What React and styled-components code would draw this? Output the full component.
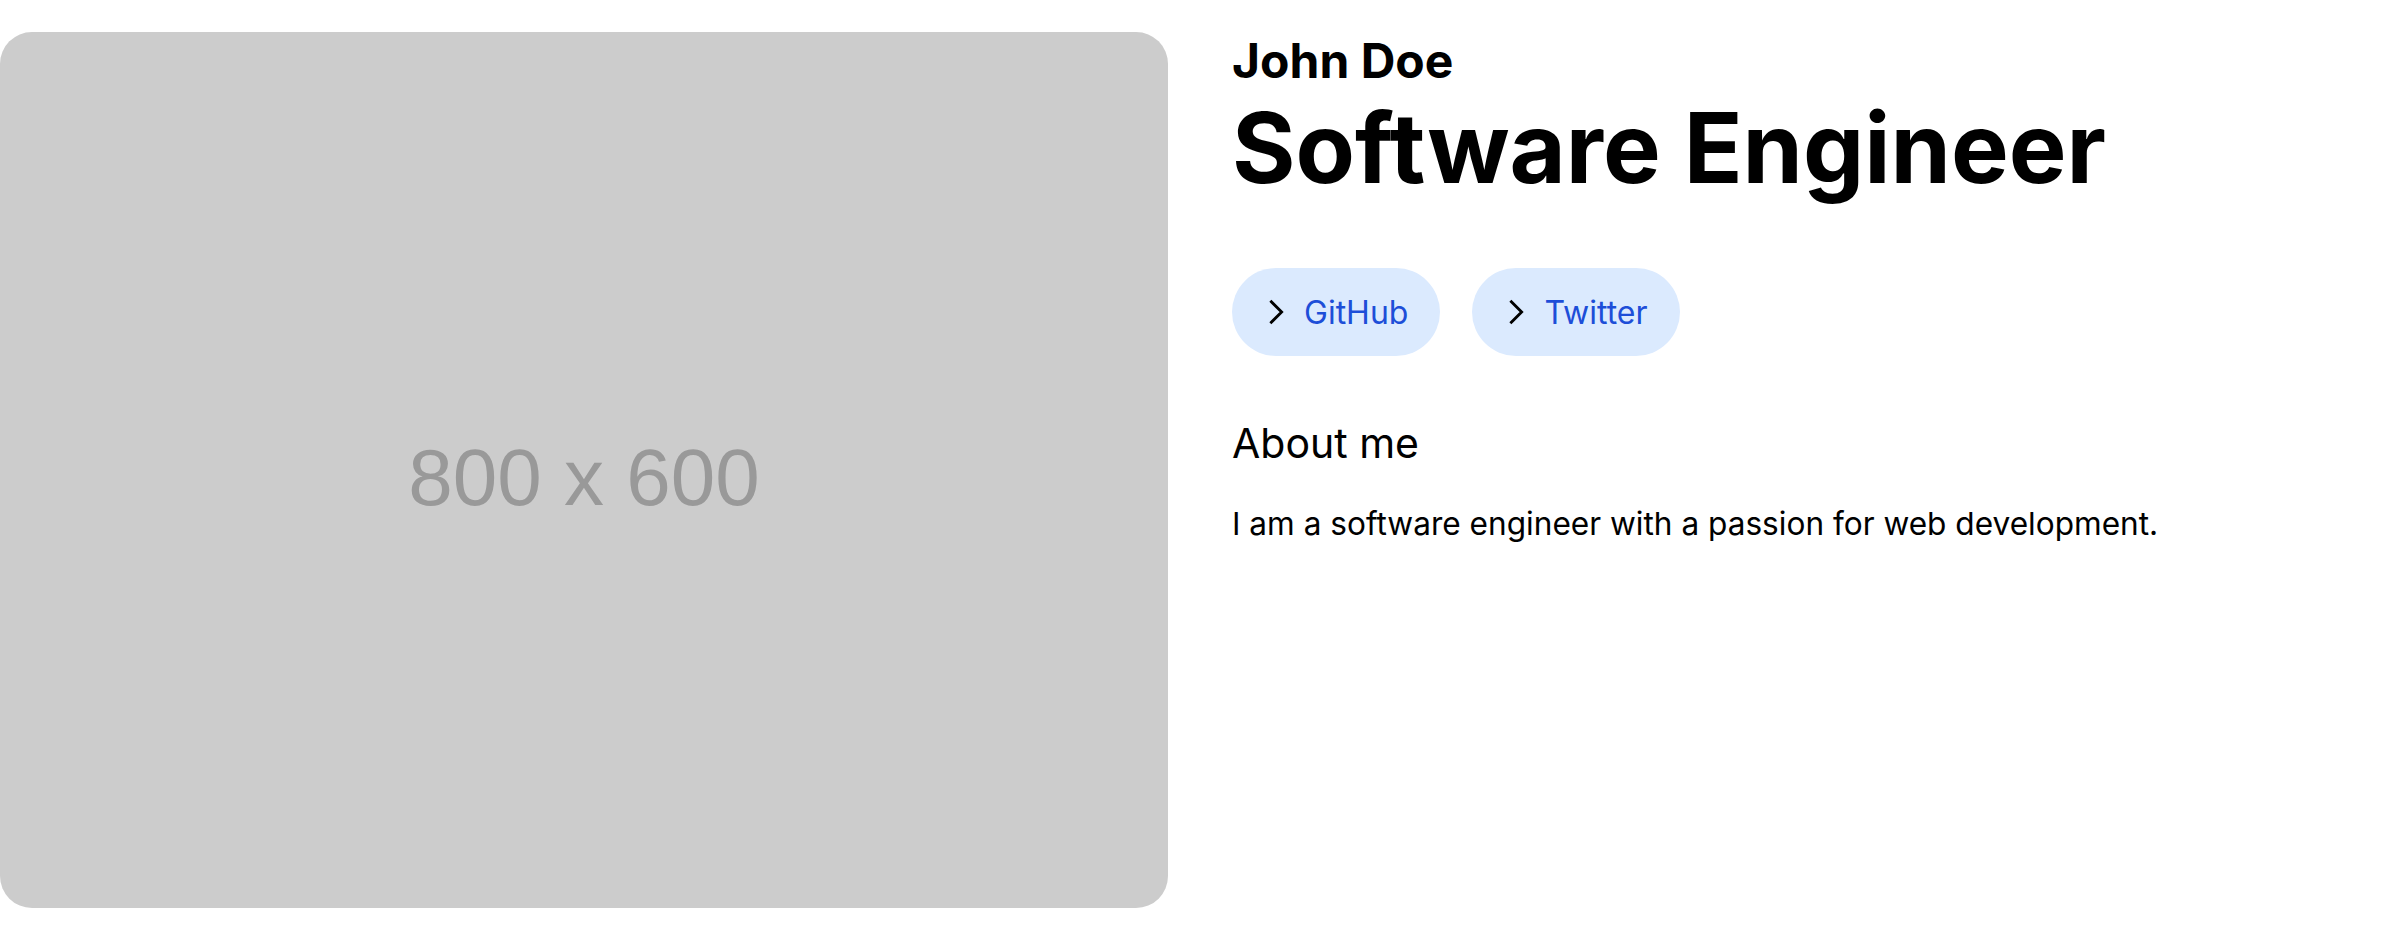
import React from 'react';
import styled, { createGlobalStyle } from 'styled-components';

const GlobalStyle = createGlobalStyle`
  body {
    margin: 0;
    background: #fff;
    font-family: Inter, "Noto Sans", sans-serif;
    color: #000;
  }
`;

const Page = styled.main`
  display: grid;
  grid-template-columns: 1fr 1fr;
  gap: 64px;
  padding-top: 32px;
  align-items: start;
`;

const Placeholder = styled.div`
  aspect-ratio: 4 / 3;
  box-sizing: border-box;
  padding-top: 16px;
  background: #cccccc;
  border-radius: 32px;
  display: flex;
  align-items: center;
  justify-content: center;
  color: #999999;
  font-family: "Liberation Sans", Arial, sans-serif;
  font-size: 80px;
`;

const Info = styled.section`
  display: flex;
  flex-direction: column;
`;

const Name = styled.h2`
  margin: 5px 0 0;
  font-size: 48px;
  line-height: 48px;
  font-weight: 700;
`;

const Title = styled.h1`
  margin: 15px 0 0;
  font-size: 97px;
  line-height: 96px;
  font-weight: 700;
`;

const Links = styled.div`
  display: flex;
  gap: 32px;
  margin-top: 72px;
`;

const LinkPill = styled.a`
  display: flex;
  align-items: center;
  gap: 10px;
  height: 88px;
  box-sizing: border-box;
  padding: 0 32px 0 26px;
  border-radius: 9999px;
  background: #dbeafe;
  color: #1d4ed8;
  font-size: 32px;
  text-decoration: none;
`;

const Chevron = styled.svg`
  width: 36px;
  height: 36px;
  flex-shrink: 0;
`;

const SectionTitle = styled.h3`
  margin: 57px 0 0;
  font-size: 41px;
  line-height: 60px;
  font-weight: 400;
`;

const Text = styled.p`
  margin: 27px 0 0;
  font-size: 31.6px;
  line-height: 48px;
`;

const links = ['GitHub', 'Twitter'];

const App = () => (
  <>
    <GlobalStyle />
    <Page>
      <Placeholder>800 x 600</Placeholder>
      <Info>
        <Name>John Doe</Name>
        <Title>Software Engineer</Title>
        <Links>
          {links.map((label) => (
            <LinkPill key={label} href="#">
              <Chevron viewBox="0 0 24 24" fill="none" stroke="#000" strokeWidth="1.9">
                <path d="M8.25 4.5l7.5 7.5-7.5 7.5" />
              </Chevron>
              {label}
            </LinkPill>
          ))}
        </Links>
        <SectionTitle>About me</SectionTitle>
        <Text>I am a software engineer with a passion for web development.</Text>
      </Info>
    </Page>
  </>
);

export default App;
